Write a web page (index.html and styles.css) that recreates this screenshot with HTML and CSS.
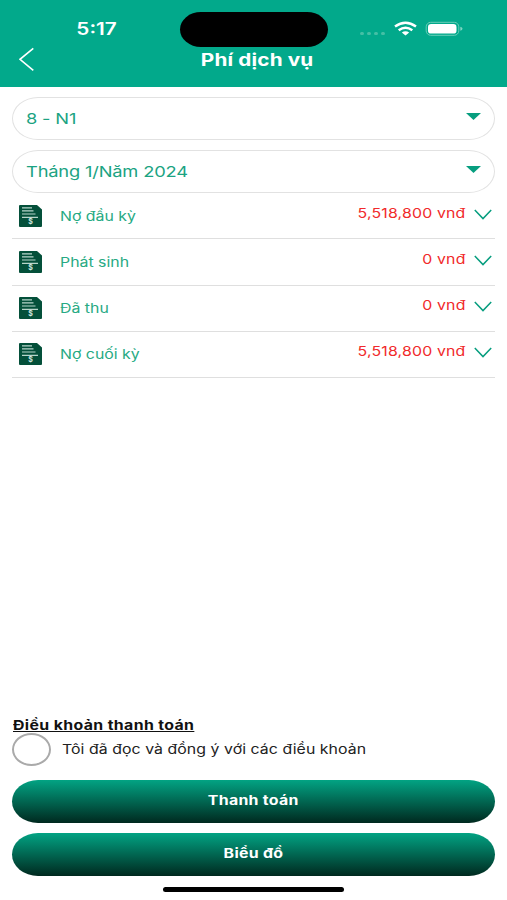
FILE: index.html
```
<!DOCTYPE html>
<html lang="vi">
<head>
<meta charset="UTF-8">
<title>Phí dịch vụ</title>
<link rel="stylesheet" href="styles.css">
</head>
<body>

<div class="screen">
  <header class="header">
    <div class="status">
      <div class="time"><span class="wide center">5:17</span></div>
      <div class="island"></div>
      <svg class="signals" width="104" height="16" viewBox="0 0 104 16">
        <g fill="#45bfa5">
          <rect x="1" y="11" width="4" height="3" rx="1.5"/>
          <rect x="8" y="11" width="4" height="3" rx="1.5"/>
          <rect x="15" y="11" width="4" height="3" rx="1.5"/>
          <rect x="22" y="11" width="4" height="3" rx="1.5"/>
        </g>
        <g fill="none" stroke="#fff" stroke-width="2.5">
          <path d="M36 5.6Q46.5 -2 57 5.6"/>
          <path d="M39.7 9.2Q46.5 4.2 53.3 9.2"/>
        </g>
        <path d="M42.8 11.5Q46.5 8.8 50.2 11.5L46.5 14.6Z" fill="#fff"/>
        <rect x="67.2" y="1.3" width="32.6" height="13" rx="4.5" fill="none" stroke="#69cdb7"/>
        <rect x="69" y="3" width="28.5" height="9.6" rx="3.2" fill="#fff"/>
        <path d="M101.3 5.8Q103.5 6.5 103.5 7.8T101.3 9.8Z" fill="#7fd5c2"/>
      </svg>
    </div>
    <div class="bar">
      <svg class="back" width="16" height="24" viewBox="0 0 16 24">
        <path d="M14.3 1.3L1 12.3L14.3 23.3" fill="none" stroke="#fff" stroke-width="1.6"/>
      </svg>
      <h1 class="title"><span class="wide center">Phí dịch vụ</span></h1>
    </div>
  </header>

  <main class="content">
    <div class="select"><span class="wide">8 - N1</span><i class="caret"></i></div>
    <div class="select"><span class="wide">Tháng 1/Năm 2024</span><i class="caret"></i></div>

    <ul class="fees">
      <li class="fee">
        <svg class="bill" viewBox="0 0 23 22">
          <path class="sheet" d="M1 0H18L23 4.500V21Q23 22 22 22H1Q0 22 0 21V1Q0 0 1 0Z"/>
          <path class="lines" d="M3 2.8H13M3 5.9H14.5M3 9H16.5M3 12.3H19"/>
          <text x="11.5" y="19.3">$</text>
        </svg>
        <div class="name"><span class="wide">Nợ đầu kỳ</span></div>
        <div class="amount"><span class="wide right">5,518,800 vnđ</span></div>
        <svg class="down" viewBox="0 0 18 11"><path d="M.8 1L9 9.6L17.2 1"/></svg>
      </li>
      <li class="fee">
        <svg class="bill" viewBox="0 0 23 22">
          <path class="sheet" d="M1 0H18L23 4.500V21Q23 22 22 22H1Q0 22 0 21V1Q0 0 1 0Z"/>
          <path class="lines" d="M3 2.8H13M3 5.9H14.5M3 9H16.5M3 12.3H19"/>
          <text x="11.5" y="19.3">$</text>
        </svg>
        <div class="name"><span class="wide">Phát sinh</span></div>
        <div class="amount"><span class="wide right">0 vnđ</span></div>
        <svg class="down" viewBox="0 0 18 11"><path d="M.8 1L9 9.6L17.2 1"/></svg>
      </li>
      <li class="fee">
        <svg class="bill" viewBox="0 0 23 22">
          <path class="sheet" d="M1 0H18L23 4.500V21Q23 22 22 22H1Q0 22 0 21V1Q0 0 1 0Z"/>
          <path class="lines" d="M3 2.8H13M3 5.9H14.5M3 9H16.5M3 12.3H19"/>
          <text x="11.5" y="19.3">$</text>
        </svg>
        <div class="name"><span class="wide">Đã thu</span></div>
        <div class="amount"><span class="wide right">0 vnđ</span></div>
        <svg class="down" viewBox="0 0 18 11"><path d="M.8 1L9 9.6L17.2 1"/></svg>
      </li>
      <li class="fee">
        <svg class="bill" viewBox="0 0 23 22">
          <path class="sheet" d="M1 0H18L23 4.500V21Q23 22 22 22H1Q0 22 0 21V1Q0 0 1 0Z"/>
          <path class="lines" d="M3 2.8H13M3 5.9H14.5M3 9H16.5M3 12.3H19"/>
          <text x="11.5" y="19.3">$</text>
        </svg>
        <div class="name"><span class="wide">Nợ cuối kỳ</span></div>
        <div class="amount"><span class="wide right">5,518,800 vnđ</span></div>
        <svg class="down" viewBox="0 0 18 11"><path d="M.8 1L9 9.6L17.2 1"/></svg>
      </li>
    </ul>
  </main>

  <footer class="footer">
    <div class="terms"><span class="wide">Điều khoản thanh toán</span></div>
    <label class="agree">
      <span class="check"></span>
      <span class="wide">Tôi đã đọc và đồng ý với các điều khoản</span>
    </label>
    <button class="button"><span class="wide center">Thanh toán</span></button>
    <button class="button"><span class="wide center">Biểu đồ</span></button>
    <div class="home"></div>
  </footer>
</div>

</body>
</html>
```
FILE: styles.css
```
* {
	box-sizing: border-box;
}

body {
	margin: 0;
	background: #fff;
	font-family: Inter, "Liberation Sans", sans-serif;
	color: #1ba382;
}

.screen {
	display: flex;
	flex-direction: column;
	width: 507px;
	height: 900px;
	overflow: hidden;
}

/* extended lettering */
.wide {
	display: inline-block;
	white-space: nowrap;
	transform: scaleX(1.22);
	transform-origin: left center;
}

.center {
	transform-origin: center;
}

.right {
	transform-origin: right center;
}

/* header */
.header {
	height: 86.5px;
	padding-top: 12px;
	background: #02a98b;
	color: #fff;
}

.status {
	display: grid;
	grid-template-columns: 180px 148px 1fr;
	height: 35px;
}

.time {
	padding: 7px 0 0 13px;
	font-size: 17px;
	line-height: 21px;
	font-weight: 600;
	text-align: center;
}

.island {
	height: 35px;
	border-radius: 21px / 17.5px;
	background: #000;
}

.signals {
	margin: 9px 0 0 31px;
}

.bar {
	display: grid;
	grid-template-columns: 19px 16px 1fr 28px;
}

.back {
	grid-column: 2;
}

.title {
	margin: 3px 0 0;
	font-size: 17px;
	line-height: 21px;
	font-weight: 700;
	letter-spacing: .12px;
	text-align: center;
}

/* selects and fee rows */
.content {
	flex: 1;
	padding: 10px 12px 0;
}

.select {
	display: flex;
	align-items: center;
	justify-content: space-between;
	height: 43px;
	margin-bottom: 10px;
	padding: 0 13px;
	border: 1px solid #e2e2e2;
	border-radius: 26px / 21.5px;
	font-size: 15px;
	letter-spacing: -.15px;
}

.caret {
	width: 15px;
	height: 7px;
	margin-top: -3px;
	background: #079e7f;
	clip-path: polygon(0 0, 100% 0, 50% 100%);
}

.fees {
	margin: -9.3px 0 0;
	padding: 0;
	list-style: none;
}

.fee {
	display: flex;
	height: 46.2px;
	padding: 11.3px 3px 0 7px;
	border-bottom: 1px solid #dfdfdf;
	font-size: 13px;
	line-height: 20px;
}

.bill {
	width: 23px;
	height: 22px;
}

.bill .sheet {
	fill: #04503a;
}

.bill .lines {
	stroke: #b8d5cb;
	stroke-width: 1.2;
}

.bill text {
	fill: #d5e8e0;
	font-size: 7px;
	font-weight: 700;
	text-anchor: middle;
}

.name {
	flex: 1;
	padding: 1px 0 0 18px;
	color: #27aa83;
}

.amount {
	margin: -2px 8px 0 0;
	color: #f12a2b;
	letter-spacing: .15px;
}

.down {
	width: 18px;
	height: 11px;
	margin-top: 4px;
	fill: none;
	stroke: #079e7f;
	stroke-width: 1.5;
}

/* footer */
.footer {
	padding: 0 12px;
	color: #222;
}

.terms {
	height: 16px;
	padding-left: 1px;
	color: #111;
	font-size: 13px;
	line-height: 16px;
	font-weight: 700;
	letter-spacing: .3px;
}

.terms .wide {
	text-decoration: underline;
}

.agree {
	display: flex;
	align-items: center;
	height: 33px;
	margin-bottom: 14px;
	font-size: 13px;
	letter-spacing: .04px;
}

.check {
	width: 39px;
	height: 33px;
	margin-right: 11px;
	border: 2px solid #aaa;
	border-radius: 50%;
}

.button {
	display: block;
	width: 100%;
	height: 43px;
	margin: 0 0 10px;
	padding: 0 0 2px;
	border: 0;
	border-radius: 26px / 21.5px;
	background: linear-gradient(#02a383, #00291f);
	color: #fff;
	font: 700 13px Inter, sans-serif;
	letter-spacing: .25px;
}

.home {
	width: 181px;
	height: 5px;
	margin: 11.5px auto 8px;
	border-radius: 3px;
	background: #000;
}
```
